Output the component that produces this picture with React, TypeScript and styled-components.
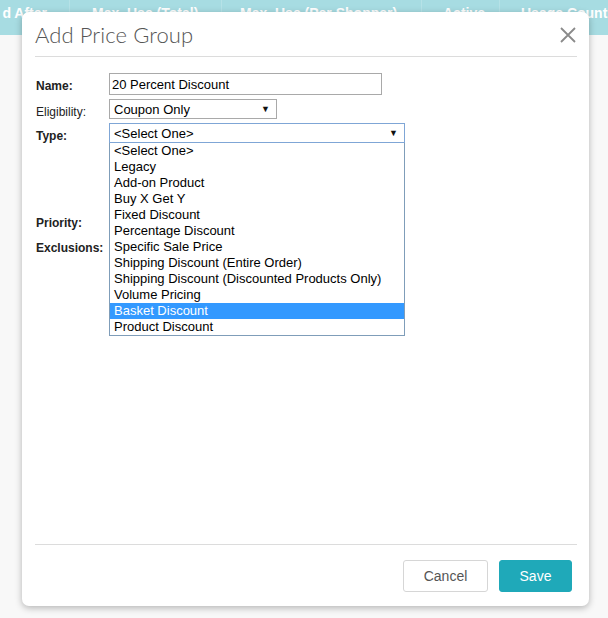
import styled, { createGlobalStyle } from "styled-components";

const GlobalStyle = createGlobalStyle`
  html, body {
    margin: 0;
    padding: 0;
    background: #f7f7f7;
  }
  body {
    font-family: "Liberation Sans", Arial, sans-serif;
    width: 608px;
    height: 618px;
    overflow: hidden;
  }
`;

//page behind the dialog
const Page = styled.div`
  position: relative;
  width: 608px;
  height: 618px;
  background: #f8f8f8;
  overflow: hidden;
`;
const TableHead = styled.div`
  display: flex;
  height: 35px;
  background: #a7dce2;
  white-space: nowrap;
`;
const HeadCell = styled.div<{ $w: number; $pad: number; $right?: boolean }>`
  flex: 0 0 ${p => p.$w}px;
  box-sizing: border-box;
  padding-top: 5px;
  padding-left: ${p => (p.$right ? 0 : p.$pad)}px;
  padding-right: ${p => (p.$right ? p.$pad : 0)}px;
  text-align: ${p => (p.$right ? "right" : "left")};
  color: #fff;
  font-weight: 700;
  font-size: 14px;
  border-right: 1px solid #b6e2e7;
`;

//dialog
const Modal = styled.div`
  position: absolute;
  left: 22px;
  top: 12px;
  width: 567px;
  height: 594px;
  background: #fff;
  border-radius: 7px;
  box-shadow: 0 2px 7px rgba(0, 0, 0, 0.28);
  display: flex;
  flex-direction: column;
  box-sizing: border-box;
  padding: 0 12px 0 13px;
`;
const ModalHeader = styled.div`
  display: flex;
  justify-content: space-between;
  align-items: center;
  height: 44px;
  border-bottom: 1px solid #dcdcdc;
`;
const Title = styled.h2`
  margin: 0;
  font-family: Lato, "Open Sans", sans-serif;
  font-weight: 300;
  font-size: 22px;
  color: #555;
  letter-spacing: 0.1px;
`;
const Close = styled.button`
  border: none;
  background: none;
  padding: 0;
  margin-right: 1px;
  margin-top: 2px;
  width: 16px;
  height: 16px;
  cursor: pointer;
  display: flex;
`;
const ModalBody = styled.div`
  flex: 1;
  padding-top: 16px;
`;
const Row = styled.div<{ $h: number; $gap?: number }>`
  display: flex;
  align-items: flex-start;
  height: ${p => p.$h}px;
  margin-bottom: ${p => p.$gap ?? 4}px;
`;
const Label = styled.label<{ $bold?: boolean }>`
  flex: 0 0 73px;
  padding-left: 1px;
  padding-top: 6px;
  font-size: 12px;
  font-weight: ${p => (p.$bold ? 700 : 400)};
  color: #222;
`;
const Field = styled.div`
  position: relative;
  flex: 1;
`;
const TextInput = styled.input`
  box-sizing: border-box;
  width: 273px;
  height: 22px;
  border: 1px solid #a9a9a9;
  padding: 0 2px;
  font-family: "Liberation Sans", Arial, sans-serif;
  font-size: 13px;
  color: #000;
  outline: none;
`;
const SelectBox = styled.div<{ $w: number; $focus?: boolean }>`
  box-sizing: border-box;
  width: ${p => p.$w}px;
  height: 20px;
  border: 1px solid ${p => (p.$focus ? "#7fa6d6" : "#a9a9a9")};
  display: flex;
  align-items: center;
  justify-content: space-between;
  padding: 0 6px 0 4px;
  font-size: 13px;
  color: #000;
  background: #fff;
`;
const Arrow = styled.span`
  font-size: 9px;
  color: #111;
`;
const OptionList = styled.ul`
  position: absolute;
  left: 0;
  top: 20px;
  width: 296px;
  margin: 0;
  padding: 0;
  list-style: none;
  box-sizing: border-box;
  border: 1px solid #7f9db9;
  border-top: none;
  background: #fff;
  z-index: 2;
`;
const Option = styled.li<{ $active?: boolean }>`
  height: 16px;
  line-height: 16px;
  padding-left: 4px;
  font-size: 13px;
  white-space: nowrap;
  color: ${p => (p.$active ? "#fff" : "#000")};
  background: ${p => (p.$active ? "#3399ff" : "transparent")};
`;
const Footer = styled.div`
  box-sizing: border-box;
  height: 62px;
  border-top: 1px solid #dcdcdc;
  display: flex;
  justify-content: flex-end;
  align-items: flex-start;
  gap: 11px;
  padding: 15px 5px 0 0;
`;
const Button = styled.button<{ $primary?: boolean; $w: number }>`
  box-sizing: border-box;
  width: ${p => p.$w}px;
  height: 32px;
  padding: 0;
  border-radius: 3px;
  font-family: "Liberation Sans", Arial, sans-serif;
  font-size: 14px;
  cursor: pointer;
  border: 1px solid ${p => (p.$primary ? "#1fa9b9" : "#d6d6d6")};
  background: ${p => (p.$primary ? "#1fa9b9" : "#fff")};
  color: ${p => (p.$primary ? "#fff" : "#555")};
`;

const columns = [
    { title: "d After", w: 70, pad: 22, right: true },
    { title: "Max. Use (Total)", w: 152, pad: 22 },
    { title: "Max. Use (Per Shopper)", w: 200, pad: 18 },
    { title: "Active", w: 78, pad: 21 },
    { title: "Usage Count", w: 160, pad: 21 },
];

const types = [
    "<Select One>",
    "Legacy",
    "Add-on Product",
    "Buy X Get Y",
    "Fixed Discount",
    "Percentage Discount",
    "Specific Sale Price",
    "Shipping Discount (Entire Order)",
    "Shipping Discount (Discounted Products Only)",
    "Volume Pricing",
    "Basket Discount",
    "Product Discount",
];

function App() {
    return (
        <Page>
            <GlobalStyle />
            <TableHead>
                {columns.map(c => (
                    <HeadCell key={c.title} $w={c.w} $pad={c.pad} $right={c.right}>
                        {c.title}
                    </HeadCell>
                ))}
            </TableHead>
            <Modal>
                <ModalHeader>
                    <Title>Add Price Group</Title>
                    <Close aria-label="Close">
                        <svg width="16" height="16" viewBox="0 0 16 16">
                            <path d="M1 1 L15 15 M15 1 L1 15" stroke="#8a8a8a" strokeWidth="1.8" fill="none" />
                        </svg>
                    </Close>
                </ModalHeader>
                <ModalBody>
                    <Row $h={22}>
                        <Label $bold>Name:</Label>
                        <Field>
                            <TextInput defaultValue="20 Percent Discount" />
                        </Field>
                    </Row>
                    <Row $h={20}>
                        <Label>Eligibility:</Label>
                        <Field>
                            <SelectBox $w={168}>
                                Coupon Only <Arrow>▼</Arrow>
                            </SelectBox>
                        </Field>
                    </Row>
                    <Row $h={20} $gap={67}>
                        <Label $bold>Type:</Label>
                        <Field>
                            <SelectBox $w={296} $focus>
                                &lt;Select One&gt; <Arrow>▼</Arrow>
                            </SelectBox>
                            <OptionList>
                                {types.map(t => (
                                    <Option key={t} $active={t === "Basket Discount"}>{t}</Option>
                                ))}
                            </OptionList>
                        </Field>
                    </Row>
                    <Row $h={20} $gap={5}>
                        <Label $bold>Priority:</Label>
                        <Field />
                    </Row>
                    <Row $h={20}>
                        <Label $bold>Exclusions:</Label>
                        <Field />
                    </Row>
                </ModalBody>
                <Footer>
                    <Button $w={85}>Cancel</Button>
                    <Button $primary $w={73}>Save</Button>
                </Footer>
            </Modal>
        </Page>
    );
}

export default App;
